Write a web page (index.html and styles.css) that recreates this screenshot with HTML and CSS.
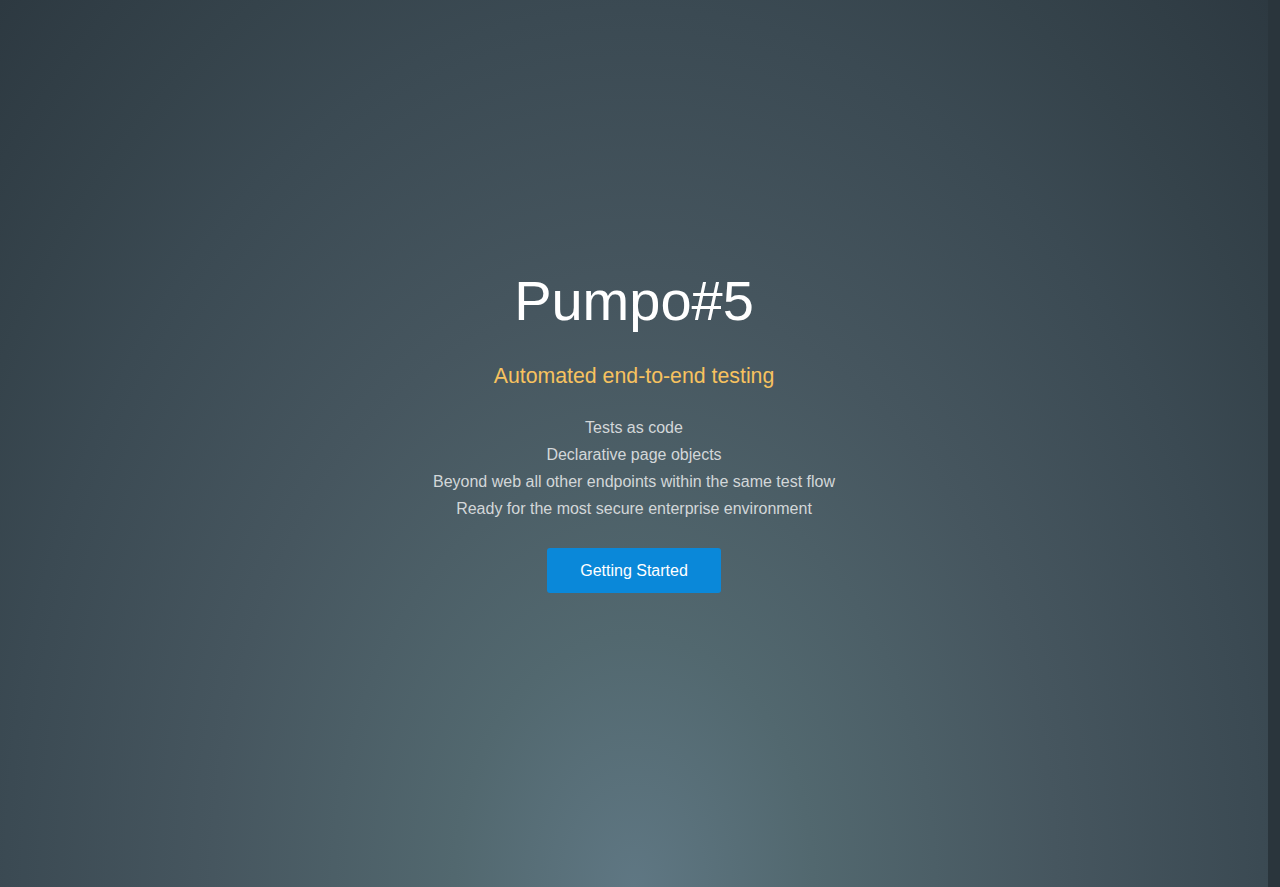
FILE: index.html
```html
<!DOCTYPE html>
<html lang="en">
<head>
<meta charset="utf-8">
<title>Pumpo#5</title>
<link rel="stylesheet" href="styles.css">
</head>
<body>
<div class="page">
  <main class="hero">
    <h1 class="hero-title">Pumpo#5</h1>
    <p class="hero-tagline">Automated end-to-end testing</p>
    <ul class="hero-features">
      <li>Tests as code</li>
      <li>Declarative page objects</li>
      <li>Beyond web all other endpoints within the same test flow</li>
      <li>Ready for the most secure enterprise environment</li>
    </ul>
    <a class="hero-button" href="#">Getting Started</a>
  </main>
  <div class="gutter"></div>
</div>
</body>
</html>
```
FILE: styles.css
```css
html, body {
  margin: 0;
  padding: 0;
  height: 100%;
}
body {
  font-family: "Liberation Sans", Arial, sans-serif;
  background: #2a353c;
}
.page {
  display: flex;
  height: 887px;
}
.hero {
  flex: 1;
  display: flex;
  flex-direction: column;
  align-items: center;
  justify-content: center;
  padding-top: 2px;
  padding-bottom: 30px;
  box-sizing: border-box;
  background: radial-gradient(ellipse farthest-corner at 50% 100%,
    #5f7783 0%, #52686f 20%, #46565f 47%, #3b4a53 70%, #35434b 82%, #2d3941 100%);
}
.gutter {
  width: 12px;
  background: #2a353c;
}
.hero-title {
  margin: 0;
  font-size: 56px;
  line-height: 67px;
  font-weight: 400;
  color: #ffffff;
}
.hero-tagline {
  margin: 29px 0 0;
  font-size: 21.3px;
  line-height: 26px;
  color: #f7c25f;
}
.hero-features {
  list-style: none;
  margin: 25px 0 0;
  padding: 0;
  font-size: 16px;
  line-height: 27px;
  color: #d3d7d9;
  text-align: center;
}
.hero-button {
  margin-top: 26px;
  display: block;
  padding: 10px 33px;
  line-height: 25px;
  font-size: 16px;
  color: #ffffff;
  background: #0a88d9;
  border-radius: 3px;
  text-decoration: none;
}
```
